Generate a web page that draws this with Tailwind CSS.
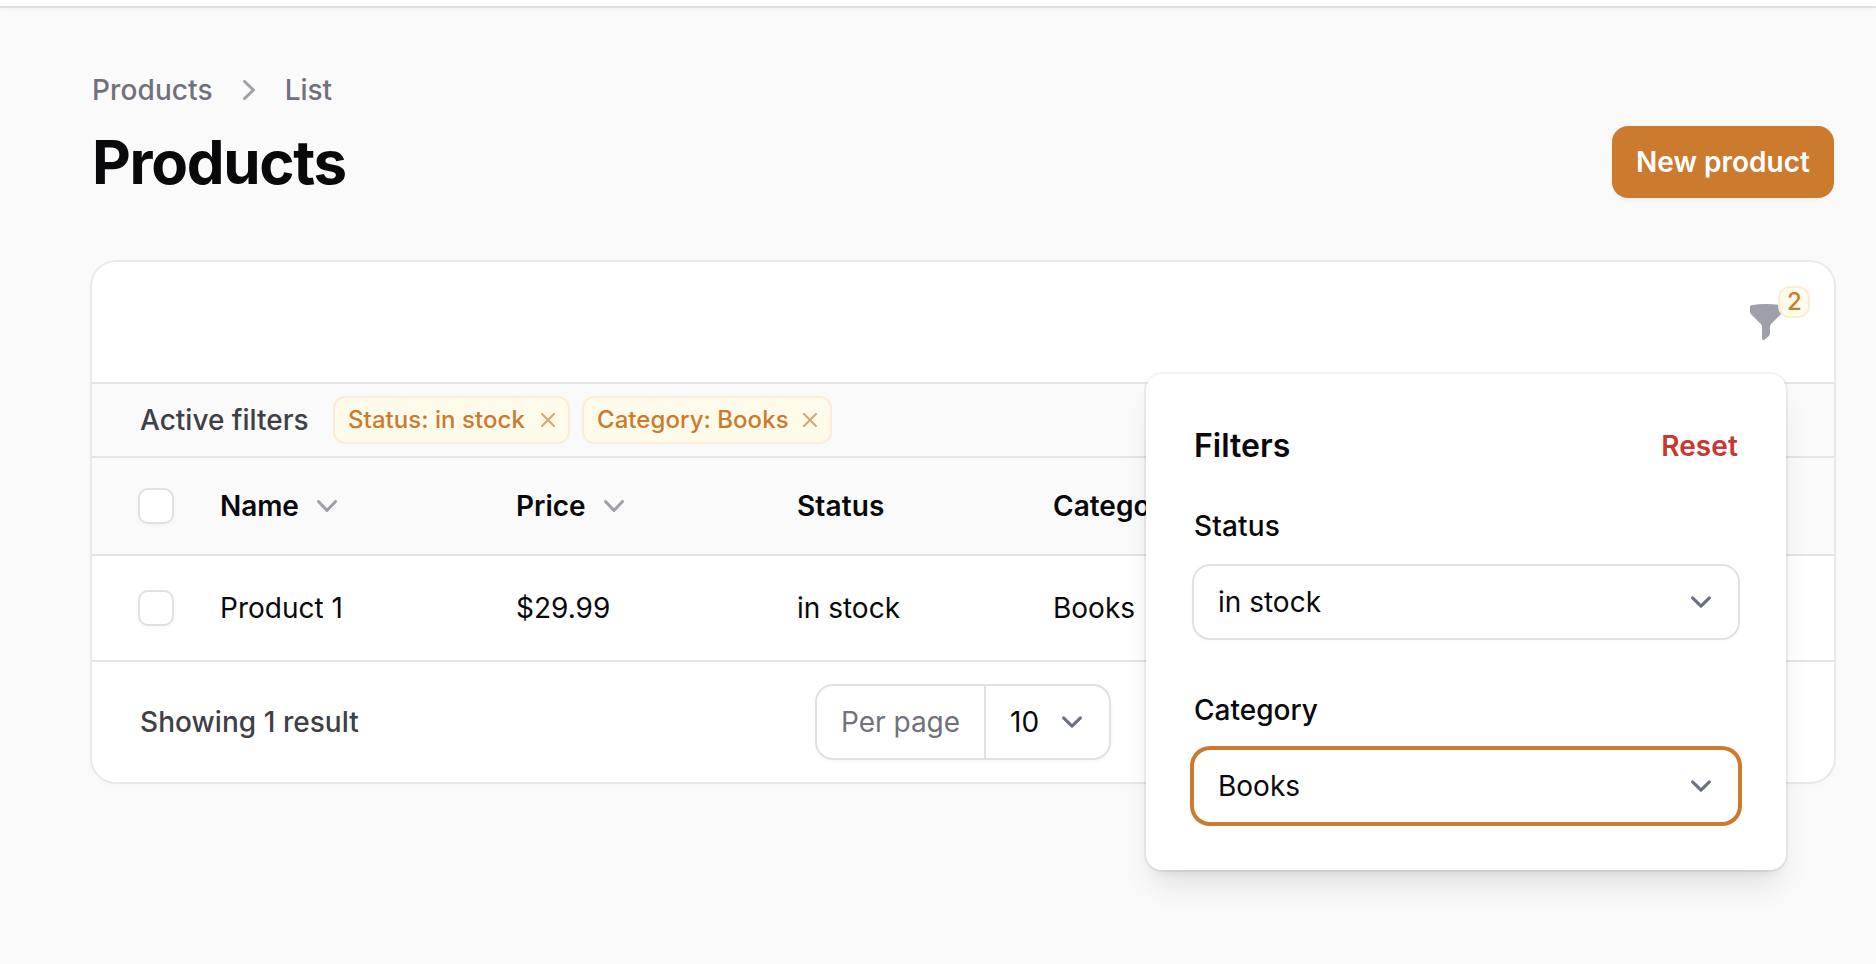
<!DOCTYPE html>
<html lang="en">
<head>
<meta charset="utf-8">
<title>Products</title>
<script src="https://cdn.jsdelivr.net/npm/@tailwindcss/browser@4"></script>
</head>
<body class="h-[964px] overflow-hidden bg-zinc-50 font-['Inter',sans-serif] text-[28px] leading-10 text-zinc-950 antialiased">
<svg class="hidden">
  <symbol id="down" viewBox="0 0 20 20"><path fill="currentColor" fill-rule="evenodd" clip-rule="evenodd" d="M5.23 7.21a.75.75 0 011.06.02L10 11.168l3.71-3.938a.75.75 0 111.08 1.04l-4.25 4.5a.75.75 0 01-1.08 0l-4.25-4.5a.75.75 0 01.02-1.06z"/></symbol>
  <symbol id="select" viewBox="0 0 20 20"><path fill="none" stroke="currentColor" stroke-linecap="round" stroke-linejoin="round" stroke-width="1.5" d="m6 8 4 4 4-4"/></symbol>
  <symbol id="close" viewBox="0 0 20 20"><path fill="currentColor" d="M6.28 5.22a.75.75 0 00-1.06 1.06L8.94 10l-3.72 3.72a.75.75 0 101.06 1.06L10 11.06l3.72 3.72a.75.75 0 101.06-1.06L11.06 10l3.72-3.72a.75.75 0 00-1.06-1.06L10 8.94 6.28 5.22z"/></symbol>
</svg>

<div class="h-1.5 bg-white shadow-[0_0_0_2px_rgb(9_9_11/0.08),0_2px_4px_rgb(0_0_0/0.05)]"></div>

<main class="pt-16 pr-[42px] pl-[92px]">
  <nav class="flex h-10 items-center gap-4 font-medium text-zinc-500">
    <span class="tracking-[0.1px]">Products</span>
    <svg class="size-10 text-zinc-400" viewBox="0 0 20 20" fill="currentColor"><path fill-rule="evenodd" clip-rule="evenodd" d="M7.21 14.77a.75.75 0 01.02-1.06L11.168 10 7.23 6.29a.75.75 0 111.04-1.08l4.5 4.25a.75.75 0 010 1.08l-4.5 4.25a.75.75 0 01-1.06-.02z"/></svg>
    <span>List</span>
  </nav>

  <header class="mt-4 flex items-center justify-between">
    <h1 class="text-[60px] leading-[72px] font-bold tracking-[-1.3px]">Products</h1>
    <button class="h-[72px] w-[222px] rounded-2xl bg-[#cb7a2e] font-semibold whitespace-nowrap text-white shadow-[0_2px_4px_rgb(0_0_0/0.05)]">New product</button>
  </header>

  <section class="relative mt-16 rounded-3xl bg-white shadow-[0_0_0_2px_rgb(9_9_11/0.06),0_2px_4px_2px_rgb(0_0_0/0.02)]">
    <div class="flex h-[120px] items-center justify-end pr-12">
      <div class="relative">
        <svg class="size-10 text-zinc-400" viewBox="0 0 20 20" fill="currentColor"><path fill-rule="evenodd" clip-rule="evenodd" d="M2.628 1.601C5.028 1.206 7.49 1 10 1s4.973.206 7.372.601a.75.75 0 01.628.74v2.288a2.25 2.25 0 01-.659 1.59l-4.682 4.683a2.25 2.25 0 00-.659 1.59v3.037c0 .684-.31 1.33-.844 1.757l-1.937 1.55A.75.75 0 018 18.25v-5.757a2.25 2.25 0 00-.659-1.591L2.659 6.22A2.25 2.25 0 012 4.629V2.34a.75.75 0 01.628-.74z"/></svg>
        <span class="absolute -top-4 left-8 flex size-8 items-center justify-center rounded-xl border-2 border-[#faecd8] bg-amber-50 pl-px text-2xl font-medium text-[#cb7a2e]">2</span>
      </div>
    </div>

    <div class="flex h-[76px] items-center border-y-2 border-zinc-200 bg-zinc-50 px-12">
      <span class="w-[193px] font-medium text-zinc-700">Active filters</span>
      <div class="flex gap-3 text-2xl font-medium tracking-[0.05px] text-[#cb7a2e]">
        <span class="flex h-12 w-[237px] items-center justify-between rounded-xl border-2 border-[#faecd8] bg-amber-50 pr-1.5 pl-[13px] whitespace-nowrap">Status: in stock<svg class="size-7 opacity-65"><use href="#close"/></svg></span>
        <span class="flex h-12 w-[250px] items-center justify-between rounded-xl border-2 border-[#faecd8] bg-amber-50 pr-1.5 pl-[13px] whitespace-nowrap">Category: Books<svg class="size-7 opacity-65"><use href="#close"/></svg></span>
      </div>
    </div>

    <div class="grid h-[98px] grid-cols-[82px_296px_281px_256px_1fr] items-center border-b-2 border-zinc-200 bg-zinc-50 pl-[46px] font-semibold">
      <span class="size-9 rounded-[10px] border-2 border-[#e1e1e2] bg-white shadow-[0_2px_4px_rgb(0_0_0/0.03)]"></span>
      <span class="flex items-center gap-2 tracking-[-0.1px]">Name<svg class="size-10 text-zinc-400"><use href="#down"/></svg></span>
      <span class="flex items-center gap-2">Price<svg class="size-10 text-zinc-400"><use href="#down"/></svg></span>
      <span class="tracking-[0.15px]">Status</span>
      <span>Category</span>
    </div>

    <div class="grid h-[106px] grid-cols-[82px_296px_281px_256px_1fr] items-center border-b-2 border-zinc-200 pl-[46px]">
      <span class="size-9 rounded-[10px] border-2 border-[#e1e1e2] bg-white shadow-[0_2px_4px_rgb(0_0_0/0.03)]"></span>
      <span>Product 1</span>
      <span>$29.99</span>
      <span>in stock</span>
      <span>Books</span>
    </div>

    <div class="flex h-[120px] items-center pl-12">
      <span class="w-[675px] font-medium tracking-[0.05px] text-zinc-700">Showing 1 result</span>
      <div class="flex h-[76px] w-[296px] rounded-[18px] border-2 border-[#e1e1e2] shadow-[0_2px_4px_rgb(0_0_0/0.03)]">
        <span class="flex w-[169px] items-center border-r-2 border-[#e1e1e2] pl-6 text-zinc-500">Per page</span>
        <span class="flex flex-1 items-center justify-between pr-4 pl-6">10<svg class="size-[42px] text-gray-500"><use href="#select"/></svg></span>
      </div>
    </div>

    <aside class="absolute top-28 right-12 w-[640px] rounded-2xl bg-white p-12 shadow-[0_0_0_2px_rgb(9_9_11/0.05),0_20px_30px_-6px_rgb(0_0_0/0.1),0_8px_12px_-8px_rgb(0_0_0/0.1)]">
      <div class="flex h-12 items-center justify-between font-semibold">
        <h2 class="text-[32px]">Filters</h2>
        <button class="tracking-[0.1px] text-[#c9372f]">Reset</button>
      </div>
      <label class="mt-8 block leading-[48px] font-medium tracking-[0.15px]">Status</label>
      <div class="mt-4 flex h-[72px] items-center justify-between rounded-2xl bg-white pr-4 pl-6 shadow-[0_0_0_2px_rgb(9_9_11/0.11),0_2px_4px_2px_rgb(0_0_0/0.02)]">in stock<svg class="size-[42px] text-gray-500"><use href="#select"/></svg></div>
      <label class="mt-12 block leading-[48px] font-medium">Category</label>
      <div class="mt-4 flex h-[72px] items-center justify-between rounded-2xl bg-white pr-4 pl-6 shadow-[0_0_0_4px_#cb7a2e]">Books<svg class="size-[42px] text-gray-500"><use href="#select"/></svg></div>
    </aside>
  </section>
</main>
</body>
</html>
